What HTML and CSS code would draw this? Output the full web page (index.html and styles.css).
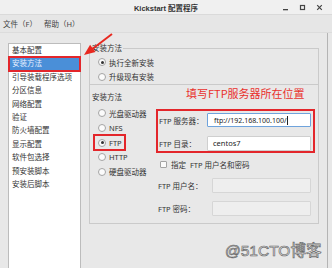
FILE: index.html
```html
<!DOCTYPE html>
<html>
<head>
<meta charset="utf-8">
<link rel="stylesheet" href="styles.css">
</head>
<body>
<div class="window">
  <div class="titlebar">
    <span></span>
    <span class="title">Kickstart 配置程序</span>
    <div class="controls">
      <svg width="7" height="7" viewBox="0 0 7 7"><rect x="1" y="5" width="5" height="1.3" fill="#444"/></svg>
      <svg width="7" height="7" viewBox="0 0 7 7"><rect x="1.5" y="1.5" width="4" height="4" fill="none" stroke="#444" stroke-width="1.2"/></svg>
      <svg width="7" height="7" viewBox="0 0 7 7"><path d="M1.2 1.2L5.8 5.8M5.8 1.2L1.2 5.8" stroke="#444" stroke-width="1.2"/></svg>
    </div>
  </div>
  <div class="menubar">
    <span class="menu-item">文件（F）</span>
    <span class="menu-item">帮助（H）</span>
  </div>
  <div class="main">
    <ul class="sidebar">
      <li>基本配置</li>
      <li class="selected">安装方法</li>
      <li>引导装载程序选项</li>
      <li>分区信息</li>
      <li>网络配置</li>
      <li>验证</li>
      <li>防火墙配置</li>
      <li>显示配置</li>
      <li>软件包选择</li>
      <li>预安装脚本</li>
      <li>安装后脚本</li>
    </ul>
    <div class="content">
      <fieldset class="frame1">
        <legend>安装方法</legend>
        <div class="radio checked"><span class="dot"></span>执行全新安装</div>
        <div class="radio"><span class="dot"></span>升级现有安装</div>
      </fieldset>
      <div class="frame2">
        <div class="section-label">安装方法</div>
        <div class="method-row">
          <div class="methods">
            <div class="radio"><span class="dot"></span>光盘驱动器</div>
            <div class="radio"><span class="dot"></span>NFS</div>
            <div class="radio checked marked"><span class="dot"></span>FTP</div>
            <div class="radio"><span class="dot"></span>HTTP</div>
            <div class="radio"><span class="dot"></span>硬盘驱动器</div>
          </div>
          <div class="ftp">
            <div class="ftp-box">
              <div class="field"><span class="flabel">FTP 服务器：</span><span class="input focused">ftp://192.168.100.100/<span class="caret"></span></span></div>
              <div class="field"><span class="flabel">FTP 目录：</span><span class="input dir">centos7</span></div>
            </div>
            <div class="check"><span class="box"></span>指定&nbsp; FTP 用户名和密码</div>
            <div class="field user"><span class="flabel wide">FTP 用户名：</span><span class="input disabled"></span></div>
            <div class="field pwd"><span class="flabel wide">FTP 密码：</span><span class="input disabled"></span></div>
          </div>
        </div>
      </div>
    </div>
  </div>
  <div class="annotation">填写FTP服务器所在位置</div>
  <svg class="arrow" width="332" height="268" viewBox="0 0 332 268">
    <line x1="112" y1="34" x2="91" y2="50" stroke="#e8281f" stroke-width="2"/>
    <polygon points="84,55 95.5,52 90.1,44.8" fill="#e8281f"/>
  </svg>
  <div class="watermark">@51CTO博客</div>
</div>
</body>
</html>
```
FILE: styles.css
```css
* { box-sizing: border-box; }
body {
  margin: 0;
  font-family: "Noto Sans", "Noto Sans CJK SC", sans-serif;
  font-size: 7.5px;
  color: #333;
}
.window {
  position: relative;
  width: 332px;
  height: 268px;
  overflow: hidden;
  background: #e8e8e8;
}
.titlebar {
  height: 15px;
  background: #f0f0f0;
  display: grid;
  grid-template-columns: 1fr auto 1fr;
  align-items: center;
  border-bottom: 1px solid #dadada;
}
.title {
  font-family: "Liberation Sans", "Noto Sans CJK SC", sans-serif;
  font-weight: bold;
  font-size: 7.5px;
  color: #333;
}
.controls {
  justify-self: end;
  display: flex;
  gap: 10px;
  padding-right: 9px;
}
.controls svg { display: block; }
.menubar {
  height: 18px;
  display: flex;
  align-items: center;
  padding-left: 3px;
  background: #e6e6e6;
  border-bottom: 1px solid #dcdcdc;
  color: #444;
}
.menu-item { width: 41px; }
.main {
  display: flex;
  height: 235px;
  width: 328px;
  border-right: 1px solid #b4b4b4;
}
.sidebar {
  list-style: none;
  margin: 10px 0 0 8px;
  padding: 0;
  width: 73px;
  background: #fff;
  border: 1px solid #bcbcbc;
  border-bottom: none;
}
.sidebar li {
  height: 13.4px;
  line-height: 13.4px;
  padding-left: 3px;
  white-space: nowrap;
}
.sidebar li.selected {
  background: #4a8fd8;
  color: #e8f0ff;
  outline: 2px solid #e3262b;
  outline-offset: -1px;
}
.content {
  margin-left: 8px;
  width: 230px;
}
.frame1 {
  margin: 10px 0 0 0;
  padding: 2px 0 0 8px;
  border: 1px solid #cacaca;
  min-width: 0;
}
.frame1 legend {
  padding: 0 1px;
  margin-left: -7px;
  line-height: 10px;
  font-size: 7.5px;
}
.radio {
  display: flex;
  align-items: center;
  height: 14.6px;
  gap: 3px;
  width: fit-content;
}
.dot {
  width: 8px;
  height: 8px;
  border-radius: 50%;
  border: 1px solid #a4a4a4;
  background: #fbfbfb;
  display: flex;
  align-items: center;
  justify-content: center;
}
.radio.checked .dot::after {
  content: "";
  width: 3px;
  height: 3px;
  border-radius: 50%;
  background: #333;
}
.frame2 {
  height: 139px;
  border: 1px solid #cacaca;
  border-top: none;
  padding-top: 7px;
}
.section-label {
  line-height: 10px;
  padding-left: 2px;
}
.method-row { display: flex; }
.methods {
  margin-left: 4px;
  width: 62px;
  padding-top: 4px;
  flex-shrink: 0;
}
.methods .radio {
  padding: 0 3px 0 4px;
}
.methods .radio.marked {
  outline: 2px solid #e3262b;
  outline-offset: -1px;
}
.ftp {
  width: 159px;
  padding-top: 7px;
}
.ftp-box {
  border: 2px solid #e3262b;
  padding-top: 1px;
  display: flex;
  flex-direction: column;
  gap: 7px;
}
.field {
  display: flex;
  align-items: center;
  height: 16px;
}
.flabel {
  width: 49px;
  padding-left: 1px;
  flex-shrink: 0;
  white-space: nowrap;
}
.flabel.wide {
  width: 56px;
  padding-left: 2px;
}
.input {
  display: flex;
  align-items: center;
  height: 14px;
  width: 104px;
  background: #fff;
  border: 1px solid #cfcfcf;
  border-radius: 1px;
  font-size: 7px;
  color: #222;
  padding-left: 6px;
}
.input.focused { border-color: #6fa3dc; }
.input.dir { height: 15px; padding-left: 5px; font-size: 7.5px; }
.caret {
  width: 1px;
  height: 9px;
  background: #222;
  margin-left: 0.5px;
}
.input.disabled {
  width: 99px;
  height: 15px;
  background: #eeeeee;
  border-color: #d6d6d6;
}
.check {
  display: flex;
  align-items: center;
  height: 14px;
  margin-top: 4px;
  padding-left: 4px;
  gap: 4px;
}
.box {
  width: 7px;
  height: 7px;
  border: 1px solid #a4a4a4;
  background: #fbfbfb;
  border-radius: 1px;
}
.field.user { margin-top: 6px; }
.field.pwd { margin-top: 7px; }
.annotation {
  position: absolute;
  left: 186px;
  top: 86px;
  font-size: 11px;
  line-height: 14px;
  color: #e8302c;
  font-family: "Noto Sans CJK SC", sans-serif;
  white-space: nowrap;
}
.arrow {
  position: absolute;
  left: 0;
  top: 0;
}
.watermark {
  position: absolute;
  left: 225px;
  top: 241px;
  font-size: 15.5px;
  line-height: 20px;
  font-family: "Liberation Sans", "Noto Sans CJK SC", sans-serif;
  color: #f4f4f4;
  -webkit-text-stroke: 0.7px #6a6a6a;
  white-space: nowrap;
}
```
